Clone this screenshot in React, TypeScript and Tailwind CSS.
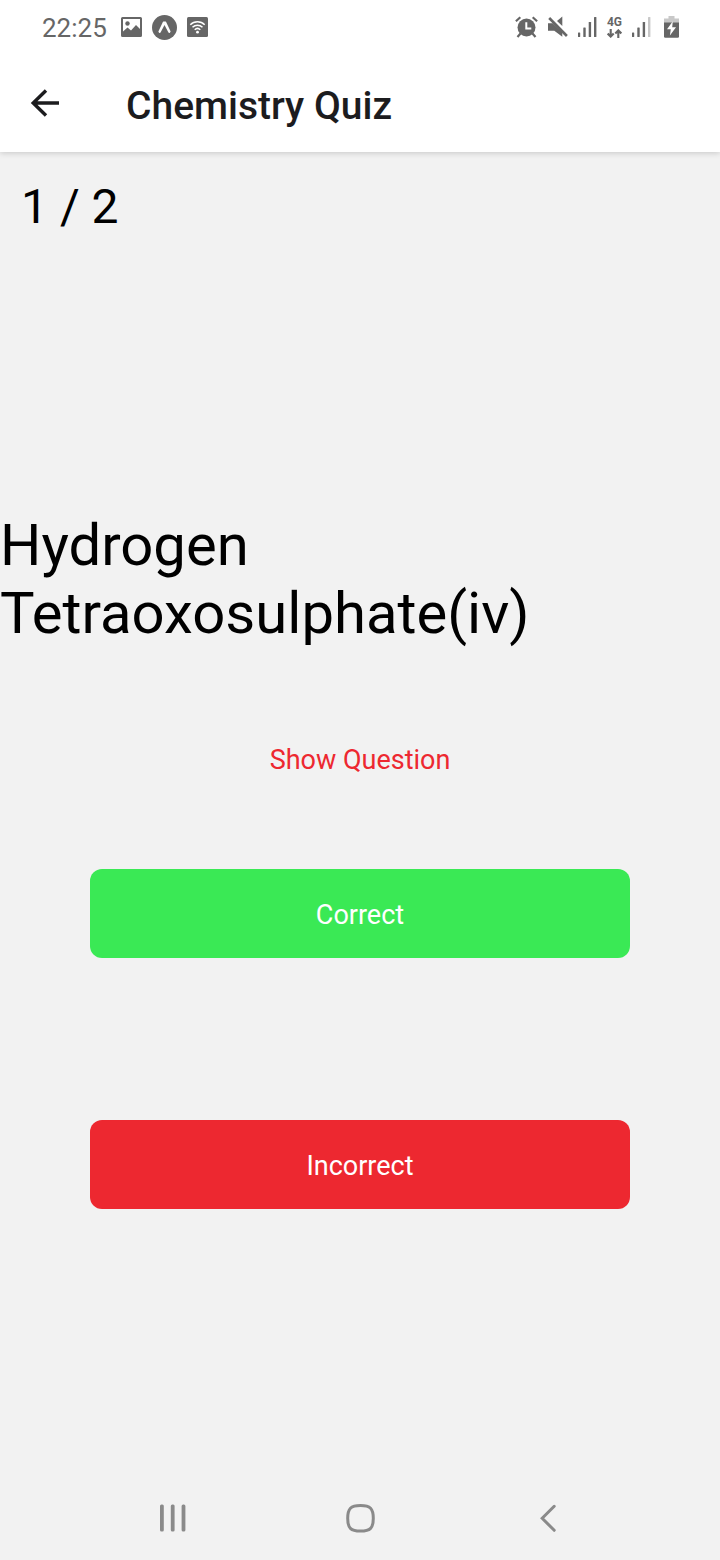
import React from "react";

function PictureIcon() {
  return (
    <svg width="21" height="20" viewBox="0 0 21 20" fill="#666" aria-hidden="true">
      <path
        fillRule="evenodd"
        d="M1.5 0h18A1.5 1.5 0 0 1 21 1.5v17a1.5 1.5 0 0 1-1.5 1.5h-18A1.5 1.5 0 0 1 0 18.500v-17A1.500 1.500 0 0 1 1.500 0zM2 2v12.500l4.500-4 3.500 3 5-5.500 4 4V2z"
      />
      <circle cx="6.500" cy="6.500" r="2.200" />
    </svg>
  );
}

function ExpoIcon() {
  return (
    <svg width="25" height="25" viewBox="0 0 25 25" aria-hidden="true">
      <circle cx="12.500" cy="12.500" r="12.500" fill="#666" />
      <path
        d="M11.300 6.600h2.400c.4.300.6.700.8 1.100l4 8.600c.2.600-.1 1-.6 1.400-.6.400-1.200.3-1.600-.4L12.500 10l-3.800 7.300c-.4.700-1 .8-1.600.4-.5-.4-.8-.8-.6-1.400l4-8.600c.2-.4.400-.8.800-1.100z"
        fill="#fff"
      />
    </svg>
  );
}

function WifiIcon() {
  return (
    <svg width="21" height="20" viewBox="0 0 21 20" aria-hidden="true">
      <rect width="21" height="20" rx="1.500" fill="#666" />
      <g fill="none" stroke="#fff" strokeWidth="1.500">
        <path d="M3.300 7.800a10.300 10.300 0 0 1 14.400 0" />
        <path d="M5.500 10.300a7.200 7.200 0 0 1 10 0" />
        <path d="M7.700 12.700a4.100 4.100 0 0 1 5.600 0" />
      </g>
      <circle cx="10.500" cy="15.200" r="1.400" fill="#fff" />
    </svg>
  );
}

function AlarmIcon() {
  return (
    <svg width="23" height="22" viewBox="0 0 23 22" aria-hidden="true">
      <g stroke="#666" strokeWidth="2.200" fill="none">
        <path d="M.9 5.200 5.300 1.200M22.100 5.200l-4.400-4" />
        <path d="M5.500 17.500l-3 3.500M17.500 17.500l3 3.500" />
      </g>
      <circle cx="11.500" cy="11.500" r="9" fill="#666" />
      <path d="M11.300 6.200v6.200h5" fill="none" stroke="#fff" strokeWidth="2" />
    </svg>
  );
}

function MuteIcon() {
  return (
    <svg width="20" height="22" viewBox="0 0 20 22" aria-hidden="true">
      <path d="M0 7.300h4.600l9.700 9v4.500L6.300 14.800H0z" fill="#666" />
      <path d="M9 4.900 14.300.5v9.600z" fill="#666" />
      <path d="M1.200 2 18.900 20" stroke="#666" strokeWidth="2.600" />
    </svg>
  );
}

function SignalIcon({ weak = false }: { weak?: boolean }) {
  return (
    <svg width="19" height="20" viewBox="0 0 19 20" fill="#666" aria-hidden="true">
      <rect x="0" y="15.500" width="2.200" height="4.500" rx=".5" />
      <rect x="5.300" y="10.500" width="2.400" height="9.500" rx=".5" />
      <rect x="10.700" y="5" width="2.400" height="15" rx=".5" />
      <rect x="16" y="0" width="2.400" height="20" rx=".5" fill={weak ? "#c8c8c8" : "#666"} />
    </svg>
  );
}

function DataArrowsIcon() {
  return (
    <svg width="15" height="9" viewBox="0 0 15 9" fill="none" stroke="#666" strokeWidth="2.100" aria-hidden="true">
      <path d="M3.700 0v7.500M.7 4.600l3 3 3-3" />
      <path d="M11.300 9V1.500M8.300 4.400l3-3 3 3" />
    </svg>
  );
}

function BatteryIcon() {
  return (
    <svg width="15" height="22" viewBox="0 0 15 22" aria-hidden="true">
      <path d="M4.500 0h6v2.500H15V7H0V2.500h4.500z" fill="#c8c8c8" />
      <path d="M0 6.500h15v14a1.300 1.300 0 0 1-1.300 1.300H1.300A1.300 1.300 0 0 1 0 20.500z" fill="#666" />
      <path d="M8.800 5.200 3 13.200h3.800l-.9 6.200L12 11.200H8.200z" fill="#fff" />
    </svg>
  );
}

function StatusBar() {
  return (
    <div className="flex h-[54px] items-center justify-between pr-[41px] pl-[42px] text-[#666]">
      <div className="flex items-center gap-[10px]">
        <span className="pt-[2px] pr-[4px] text-[26px] leading-8">22:25</span>
        <PictureIcon />
        <ExpoIcon />
        <WifiIcon />
      </div>
      <div className="flex items-center gap-[10px]">
        <AlarmIcon />
        <MuteIcon />
        <SignalIcon />
        <div className="flex flex-col items-center gap-px">
          <span className="text-[12px] leading-[12px] font-bold">4G</span>
          <DataArrowsIcon />
        </div>
        <SignalIcon weak />
        <span className="pl-[3px]">
          <BatteryIcon />
        </span>
      </div>
    </div>
  );
}

function TitleBar() {
  return (
    <div className="flex h-[98px] items-center gap-[66px] px-[30px]">
      <button type="button" aria-label="Back">
        <svg width="30" height="30" viewBox="0 0 30 30" fill="none" stroke="#1c1c1e" strokeWidth="3.400" aria-hidden="true">
          <path d="M29 15H3M16 2.500 3.200 15 16 27.500" />
        </svg>
      </button>
      <h1 className="pt-[6px] text-[39px] leading-[46px] font-medium text-[#1c1c1e]">Chemistry Quiz</h1>
    </div>
  );
}

function AnswerButton({ label, color }: { label: string; color: string }) {
  return (
    <button
      type="button"
      className={`h-[89px] w-3/4 rounded-xl pt-[2px] text-[27px] leading-8 text-white ${color}`}
    >
      {label}
    </button>
  );
}

function NavigationBar() {
  return (
    <nav className="grid h-[84px] grid-cols-3 items-center justify-items-center px-20">
      <button type="button" aria-label="Recent apps">
        <svg width="26" height="28" viewBox="0 0 26 28" fill="#8a8a8a" aria-hidden="true">
          <rect x="0" y=".5" width="3.800" height="27" rx="1.500" />
          <rect x="10.800" y=".5" width="3.800" height="27" rx="1.500" />
          <rect x="21.600" y=".5" width="3.800" height="27" rx="1.500" />
        </svg>
      </button>
      <button type="button" aria-label="Home">
        <svg width="30" height="30" viewBox="0 0 30 30" fill="none" stroke="#8a8a8a" strokeWidth="3" aria-hidden="true">
          <path d="M15.500 2.500c9.800 0 12.800 3 12.800 12.800s-3 12.800-12.800 12.800S2.700 25.100 2.700 15.300 5.700 2.500 15.500 2.500z" />
        </svg>
      </button>
      <button type="button" aria-label="Back">
        <svg width="18" height="28" viewBox="0 0 18 28" fill="none" stroke="#8a8a8a" strokeWidth="3" strokeLinecap="round" aria-hidden="true">
          <path d="M16.200 2.300 4.200 14.300l12 12" />
        </svg>
      </button>
    </nav>
  );
}

export default function App() {
  return (
    <div className="flex min-h-screen flex-col bg-[#f2f2f2] font-['Roboto',sans-serif]">
      <header className="bg-white shadow-[0_1px_6px_rgba(0,0,0,0.18)]">
        <StatusBar />
        <TitleBar />
      </header>
      <main className="flex flex-1 flex-col items-center">
        <p className="w-full px-[21px] pt-[27px] text-[48px] leading-[56px] text-black">1 / 2</p>
        <h2 className="mt-[276px] w-full text-[58px] leading-[68px] font-normal text-black">
          Hydrogen Tetraoxosulphate(iv)
        </h2>
        <button type="button" className="mt-[97px] text-[27px] leading-8 text-[#ed2830]">
          Show Question
        </button>
        <div className="mt-[93px] flex w-full flex-col items-center gap-[162px]">
          <AnswerButton label="Correct" color="bg-[#3ae955]" />
          <AnswerButton label="Incorrect" color="bg-[#ed2830]" />
        </div>
      </main>
      <NavigationBar />
    </div>
  );
}
